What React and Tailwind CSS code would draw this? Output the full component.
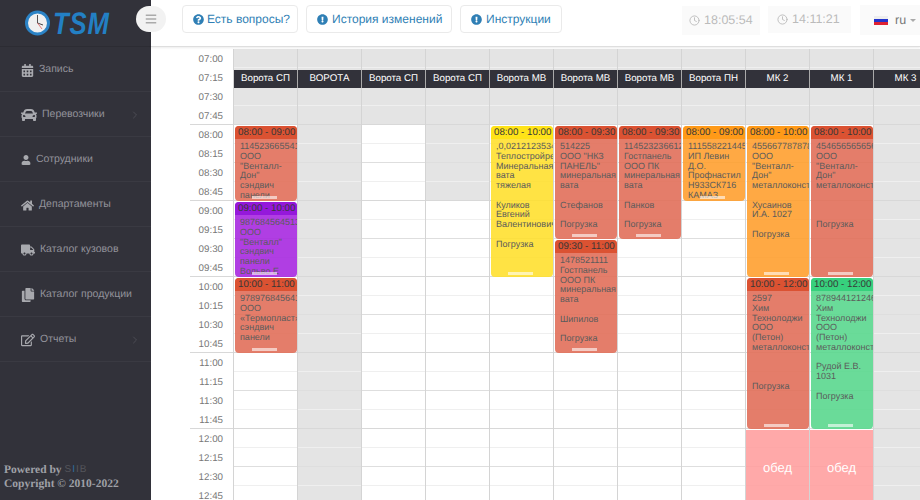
import React from 'react';
import { Clock, ChevronRight } from 'lucide-react';
import { FaBars, FaCalendarAlt, FaCar, FaUser, FaHome, FaTruck, FaCopy, FaRegEdit, FaQuestionCircle, FaExclamationCircle } from 'react-icons/fa';

const TIMES = [];
for (let h = 7; h <= 12; h++) {
  for (const m of ['00', '15', '30', '45']) TIMES.push(`${String(h).padStart(2, '0')}:${m}`);
}

const menu = [
  { label: 'Запись', icon: FaCalendarAlt, size: 13 },
  { label: 'Перевозчики', icon: FaCar, size: 16, arrow: true },
  { label: 'Сотрудники', icon: FaUser, size: 10 },
  { label: 'Департаменты', icon: FaHome, size: 13 },
  { label: 'Каталог кузовов', icon: FaTruck, size: 14 },
  { label: 'Каталог продукции', icon: FaCopy, size: 14 },
  { label: 'Отчеты', icon: FaRegEdit, size: 14, arrow: true },
];

const red = { head: 'bg-[#d8401c]', body: 'bg-[#e2705a]' };
const orange = { head: 'bg-[#ff9000]', body: 'bg-[#ffa030]' };
const yellow = { head: 'bg-[#ffe000]', body: 'bg-[#ffe030]' };
const purple = { head: 'bg-[#8a00d8]', body: 'bg-[#a82ae0]' };
const green = { head: 'bg-[#22cc70]', body: 'bg-[#5ad88e]' };

const columns = [
  { title: 'Ворота СП', events: [
    { start: 4, span: 4, time: '08:00 - 09:00', color: red, lines: ['114523665541', 'ООО', '"Венталл-', 'Дон"', 'сэндвич', 'панели'] },
    { start: 8, span: 4, time: '09:00 - 10:00', color: purple, lines: ['987684564513', 'ООО', '"Венталл"', 'сэндвич', 'панели', 'Вольво Е'] },
    { start: 12, span: 4, time: '10:00 - 11:00', color: red, lines: ['978976845641', 'ООО', '«Термопласт»', 'сэндвич', 'панели'] },
  ] },
  { title: 'ВОРОТА', closed: [[0, 24]], events: [] },
  { title: 'Ворота СП', events: [] },
  { title: 'Ворота СП', closed: [[4, 8]], events: [] },
  { title: 'Ворота МВ', events: [
    { start: 4, span: 8, time: '08:00 - 10:00', color: yellow, lines: [',0,0212123534', 'Теплостройре', 'Минеральная', 'вата', 'тяжелая', '', 'Куликов', 'Евгений', 'Валентинович', '', 'Погрузка'] },
  ] },
  { title: 'Ворота МВ', events: [
    { start: 4, span: 6, time: '08:00 - 09:30', color: red, lines: ['514225', 'ООО "НКЗ', 'ПАНЕЛЬ"', 'минеральная', 'вата', '', 'Стефанов', '', 'Погрузка'] },
    { start: 10, span: 6, time: '09:30 - 11:00', color: red, lines: ['1478521111', 'Гостпанель', 'ООО ПК', 'минеральная', 'вата', '', 'Шипилов', '', 'Погрузка'] },
  ] },
  { title: 'Ворота МВ', events: [
    { start: 4, span: 6, time: '08:00 - 09:30', color: red, lines: ['114523236612', 'Гостпанель', 'ООО ПК', 'минеральная', 'вата', '', 'Панков', '', 'Погрузка'] },
  ] },
  { title: 'Ворота ПН', events: [
    { start: 4, span: 4, time: '08:00 - 09:00', color: orange, lines: ['111558221445', 'ИП Левин', 'Д.О.', 'Профнастил', 'Н933СК716', 'КАМАЗ'] },
  ] },
  { title: 'МК 2', lunch: true, events: [
    { start: 4, span: 8, time: '08:00 - 10:00', color: orange, lines: ['455667787878', 'ООО', '"Венталл-', 'Дон"', 'металлоконст', '', 'Хусаинов', 'И.А. 1027', '', 'Погрузка'] },
    { start: 12, span: 8, time: '10:00 - 12:00', color: red, lines: ['2597', 'Хим', 'Технолоджи', 'ООО', '(Петон)', 'металлоконст', '', '', '', 'Погрузка'] },
  ] },
  { title: 'МК 1', lunch: true, events: [
    { start: 4, span: 8, time: '08:00 - 10:00', color: red, lines: ['454656565656', 'ООО', '"Венталл-', 'Дон"', 'металлоконст', '', '', '', 'Погрузка'] },
    { start: 12, span: 8, time: '10:00 - 12:00', color: green, lines: ['878944121246', 'Хим', 'Технолоджи', 'ООО', '(Петон)', 'металлоконст', '', 'Рудой Е.В.', '1031', '', 'Погрузка'] },
  ] },
  { title: 'МК 3', closed: [[0, 24]], events: [] },
];

const isClosed = (col, i) =>
  i < 4 || (col.closed || []).some(([a, b]) => i >= a && i < b);

const slotLine = (i) => (i % 4 === 3 ? 'border-[#d8d8d8]' : i % 2 === 1 ? 'border-[#dedede]' : 'border-[#efefef]');

const EventCard = ({ ev }) => (
  <div
    className={`absolute left-[1px] w-[61.5px] rounded-[4px] overflow-hidden opacity-90 ${ev.color.body}`}
    style={{ top: ev.start * 19 + 1, height: ev.span * 19 - 1 }}
  >
    <div className={`h-[13px] pl-[3px] text-[9.75px] leading-[14px] text-[#222] whitespace-nowrap ${ev.color.head}`}>{ev.time}</div>
    <div className="pt-[3px] pl-[5px] text-[9px] leading-[9.75px] text-[#4a4a4a] whitespace-nowrap overflow-hidden">
      {ev.lines.map((l, i) => (
        <div key={i} className="h-[9.75px]">{l || '\u00a0'}</div>
      ))}
    </div>
    <div className="absolute bottom-[2px] left-[17px] w-[25px] h-[3px] bg-white/60" />
  </div>
);

const Column = ({ col }) => (
  <div className="relative w-[64px] shrink-0 border-r border-[#d4d4d4]">
    {TIMES.map((t, i) => (
      <div key={t} className={`h-[19px] border-b ${slotLine(i)} ${isClosed(col, i) ? 'bg-[#e4e4e4]' : 'bg-white'}`} />
    ))}
    {col.lunch && (
      <div className="absolute left-0 right-0 top-[381px] h-[76px] bg-[#ff9f9f]/90 flex items-center justify-center text-[13px] text-white">обед</div>
    )}
    {col.events.map((ev) => <EventCard key={ev.time} ev={ev} />)}
  </div>
);

const Sidebar = () => (
  <aside className="w-[151px] shrink-0 bg-[#32323a] flex flex-col relative">
    <div className="h-[47px] shrink-0 flex items-center pl-[25px] border-b border-[#2c2c33]">
      <svg width="25" height="26" viewBox="0 0 25 26">
        <circle cx="12.5" cy="13" r="11" fill="#f0f0f0" stroke="#2b83c6" strokeWidth="3" />
        <path d="M12.5 5 L12.5 13" stroke="#555" strokeWidth="1" />
        <path d="M12.5 13 L18 15" stroke="#444" strokeWidth="1" />
        <path d="M12.5 13 L17 19" stroke="#e06060" strokeWidth="0.8" />
      </svg>
      <span className="ml-[3px] text-[31px] leading-none font-bold italic tracking-[1px] text-[#2380c4] scale-x-[0.83] origin-left">TSM</span>
    </div>
    <nav>
      {menu.map((item) => {
        const Icon = item.icon;
        return (
          <div key={item.label} className="flex items-center h-[45px] pl-[21px] pt-[2px] text-[10.5px] text-[#92939a] border-b border-[#3a3a42]">
            <Icon size={item.size} className="text-[#a8a9ae] shrink-0" />
            <span className="ml-[5px]">{item.label}</span>
            {item.arrow && <ChevronRight size={12} className="ml-auto mr-[10px] text-[#4c4c54]" />}
          </div>
        );
      })}
    </nav>
    <div className="mt-auto mb-[9px] pl-[4px] text-[11.5px] leading-[14px] font-bold text-[#9fa0a6] font-['Liberation_Serif',serif]">
      <div className="flex items-center">
        Powered by
        <span className="ml-[3px] text-[10px] tracking-[1px] font-normal text-[#55565c] font-['Liberation_Sans',sans-serif]">S<span className="text-[#2f6f9f]">I</span>IB</span>
      </div>
      <div>Copyright © 2010-2022</div>
    </div>
  </aside>
);

const Topbar = () => (
  <header className="h-[47px] shrink-0 bg-white border-b border-[#dedede] shadow-[0_1px_2px_rgba(0,0,0,0.08)] relative z-20 whitespace-nowrap">
    <button className="absolute left-[-15px] top-[6px] w-[30px] h-[26px] rounded-full bg-[#f2f2f2] flex items-center justify-center">
      <FaBars size={12} className="text-[#aaa]" />
    </button>
    <div className="flex items-start pl-[31px] pt-[5px] text-[12px] text-[#2f7fb5]">
      <div className="h-[28px] w-[116px] shrink-0 flex items-center pl-[10px] gap-[3px] rounded border border-[#eaeaea]">
        <FaQuestionCircle size={11} />Есть вопросы?
      </div>
      <div className="ml-[8px] h-[28px] w-[146px] shrink-0 flex items-center pl-[10px] gap-[4px] rounded border border-[#eaeaea]">
        <FaExclamationCircle size={11} />История изменений
      </div>
      <div className="ml-[8px] h-[28px] w-[102px] shrink-0 flex items-center pl-[10px] gap-[4px] rounded border border-[#eaeaea]">
        <FaExclamationCircle size={11} />Инструкции
      </div>
      <div className="ml-[120px] mt-[1px] h-[29px] w-[78px] shrink-0 flex items-center pl-[7px] gap-[4px] bg-[#fafafa] text-[12.5px] text-[#bbb]">
        <Clock size={11} />18:05:54
      </div>
      <div className="ml-[8px] mt-[1px] h-[27px] w-[83px] shrink-0 flex items-center pl-[9px] gap-[4px] bg-[#fafafa] text-[12.5px] text-[#bbb]">
        <Clock size={11} />14:11:21
      </div>
      <div className="ml-[9px] h-[30px] w-[70px] shrink-0 flex items-center pl-[14px] bg-[#fafafa] text-[12.5px] text-[#777]">
        <span className="w-[14px] h-[9px] flex flex-col">
          <span className="flex-1 bg-[#eee]" />
          <span className="flex-1 bg-[#2233cc]" />
          <span className="flex-1 bg-[#dd2233]" />
        </span>
        <span className="ml-[7px]">ru</span>
        <span className="ml-[4px] border-x-[3px] border-x-transparent border-t-[3px] border-t-[#aaa]" />
      </div>
    </div>
  </header>
);

const App = () => (
  <div className="w-[920px] h-[500px] overflow-hidden flex bg-white font-['Liberation_Sans',sans-serif] [text-rendering:geometricPrecision]">
    <Sidebar />
    <div className="flex-1 min-w-0 flex flex-col">
      <Topbar />
      <div className="flex-1 min-h-0 overflow-hidden relative pl-[39px] pt-[2px]">
        <div className="flex relative">
          <div className="w-[44px] shrink-0 border-r border-[#d4d4d4]">
            {TIMES.map((t, i) => (
              <div key={t} className={`h-[19px] pr-[10px] text-right text-[9.75px] leading-[21px] text-[#777] ${i % 4 === 3 ? 'border-b border-[#d8d8d8]' : ''}`}>{t}</div>
            ))}
          </div>
          {columns.map((col, i) => <Column key={i} col={col} />)}
          <div className="absolute left-[44px] top-[21px] h-[18px] flex">
            {columns.map((col, i) => (
              <div key={i} className="w-[64px] shrink-0 bg-[#32323a] border-r border-[#aaa] text-center text-[9.75px] leading-[17px] text-white whitespace-nowrap overflow-hidden">{col.title}</div>
            ))}
          </div>
        </div>
      </div>
    </div>
  </div>
);

export default App;
